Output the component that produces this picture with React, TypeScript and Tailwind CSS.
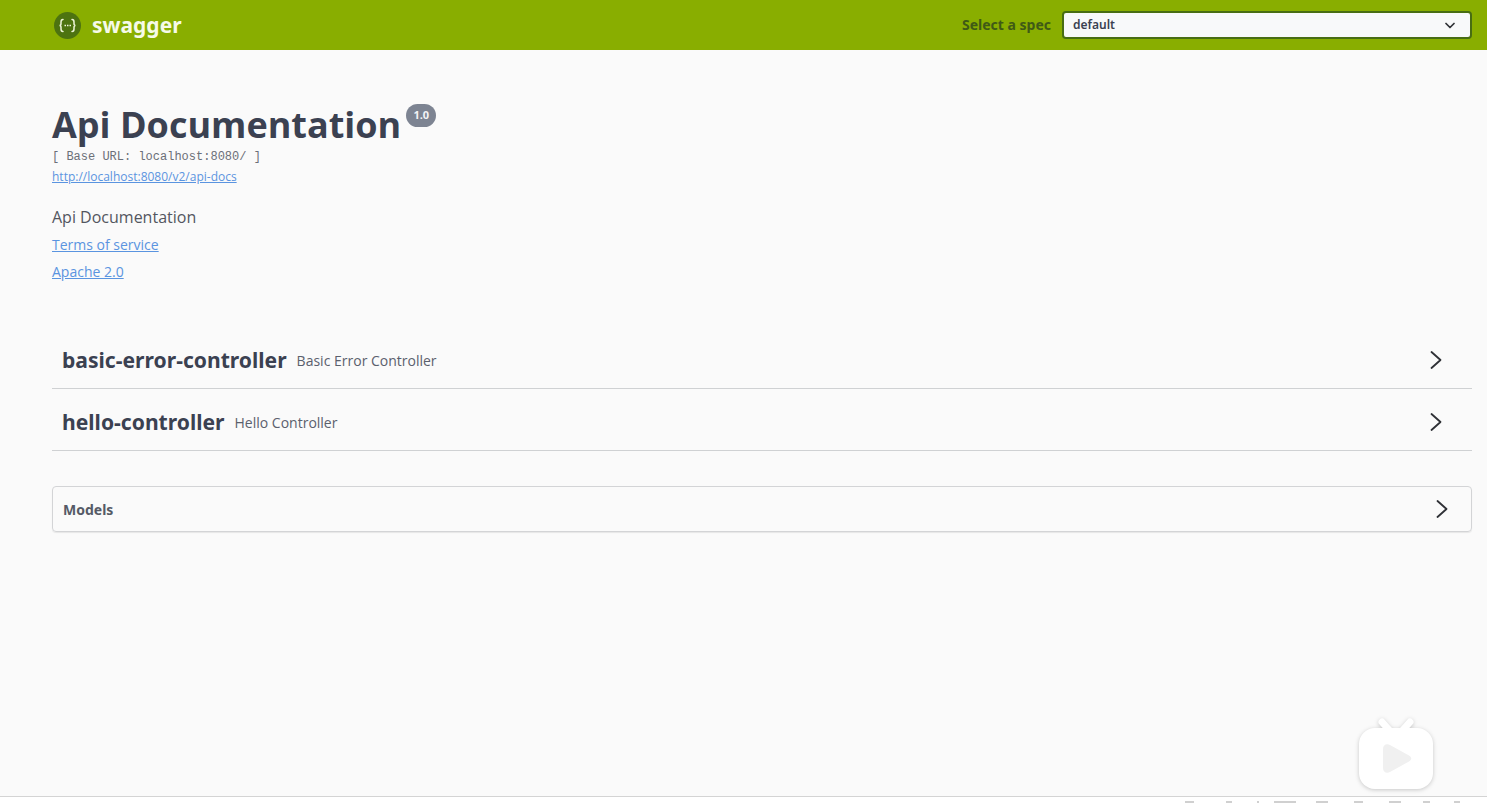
import React from "react";

const tags = [
  { name: "basic-error-controller", desc: "Basic Error Controller" },
  { name: "hello-controller", desc: "Hello Controller" },
];

// clipped tops of whatever sits under the window edge in the recording
const footerMarks = [
  { w: "w-[9px]", ml: "ml-[15px]" },
  { w: "w-[6px]", ml: "ml-[32px]" },
  { w: "w-[2px]", ml: "ml-[25px]" },
  { w: "w-[22px]", ml: "ml-[15px]" },
  { w: "w-[12px]", ml: "ml-[20px]" },
  { w: "w-[9px]", ml: "ml-[26px]" },
  { w: "w-[12px]", ml: "ml-[26px]" },
  { w: "w-[7px]", ml: "ml-[22px]" },
  { w: "w-[6px]", ml: "ml-[24px]" },
];

function Arrow({ className }: { className?: string }) {
  return (
    <svg width="12" height="20" viewBox="0 0 12 20" fill="none" className={className}>
      <path d="M1.500 2l9 8-9 8" stroke="#2f3136" strokeWidth="1.800" strokeLinecap="round" strokeLinejoin="round" />
    </svg>
  );
}

export default function App() {
  return (
    <div className="relative flex h-[803px] flex-col overflow-hidden bg-[#fafafa] font-['Open_Sans',sans-serif]">
      <header className="flex h-[50px] shrink-0 items-center bg-[#89ae00] pl-[54px] pr-[15px]">
        <svg width="27" height="27" viewBox="0 0 27 27" fill="none">
          <circle cx="13.500" cy="13.500" r="13.500" fill="#4d7310" />
          <path d="M9 7.500c-2 0-2 1-2 2.500v1.500c0 1-.5 2-1.500 2 1 0 1.500 1 1.500 2V17c0 1.500 0 2.500 2 2.500M18 7.500c2 0 2 1 2 2.500v1.500c0 1 .5 2 1.500 2-1 0-1.500 1-1.500 2V17c0 1.500 0 2.500-2 2.500" stroke="#eef5d8" strokeWidth="1.500" strokeLinecap="round" />
          <path d="M10.500 13.500h6.500" stroke="#eef5d8" strokeWidth="1.600" strokeDasharray="1.500 1" />
        </svg>
        <span className="ml-[11px] font-['Noto_Sans',sans-serif] text-[21px] font-bold leading-none text-[#f6fae8]">swagger</span>
        <span className="mb-[2px] ml-auto mr-[11px] font-['Noto_Sans',sans-serif] text-[14px] font-bold text-[#3f5a16]">Select a spec</span>
        <div className="flex h-[28px] w-[410px] items-center justify-between rounded-[4px] border-2 border-[#486d13] bg-[#f8f9fa] pl-[9px] pr-[15px]">
          <span className="font-['Noto_Sans',sans-serif] text-[12px] font-semibold text-[#3b4151]">default</span>
          <svg width="10" height="7" viewBox="0 0 10 7" fill="none">
            <path d="M1 1.500l4 4 4-4" stroke="#2f3136" strokeWidth="1.700" strokeLinecap="round" strokeLinejoin="round" />
          </svg>
        </div>
      </header>

      <main className="flex-1 pl-[52px] pr-[15px]">
        <section className="pt-[52px]">
          <div className="flex items-start">
            <h1 className="text-[36px] font-bold leading-[45px] text-[#3b4151]">Api Documentation</h1>
            <span className="ml-[5px] mt-[2px] flex h-[23px] w-[30px] items-center justify-center rounded-full bg-[#7d8492] text-[11px] font-bold text-[#f2f3f5]">1.0</span>
          </div>
          <p className="mt-[2px] font-['Liberation_Mono',monospace] text-[12px] leading-[16px] text-[#6b6f78]">[ Base URL: localhost:8080/ ]</p>
          <a className="mt-[4px] block text-[12px] leading-[16px] text-[#5a94e0] underline">http://localhost:8080/v2/api-docs</a>
          <p className="mt-[22px] text-[16px] leading-[20px] text-[#53565f]">Api Documentation</p>
          <a className="mt-[8px] block text-[14px] leading-[20px] text-[#5a94e0] underline">Terms of service</a>
          <a className="mt-[7px] block text-[14px] leading-[20px] text-[#5a94e0] underline">Apache 2.0</a>
        </section>

        <section className="mt-[45px]">
          {tags.map((tag) => (
            <div key={tag.name} className="flex h-[62px] items-center border-b border-[#cfd1d3] pl-[10px] pr-[30px] pt-[5px]">
              <span className="font-['Noto_Sans',sans-serif] text-[21.100px] font-bold text-[#3b4151]">{tag.name}</span>
              <span className="ml-[10px] text-[14px] text-[#5a606d]">{tag.desc}</span>
              <Arrow className="ml-auto" />
            </div>
          ))}
        </section>

        <section className="mt-[35px] flex h-[46px] items-center rounded-[4px] border border-[#d3d4d6] pl-[10px] pr-[23px] shadow-[0_1px_1px_rgba(0,0,0,0.08)]">
          <span className="font-['Noto_Sans',sans-serif] text-[14px] font-bold text-[#555a66]">Models</span>
          <Arrow className="ml-auto" />
        </section>
      </main>

      <footer className="flex h-[7px] shrink-0 items-end border-t border-[#d4d4d4] bg-white pl-[1170px]">
        {footerMarks.map((m, i) => (
          <span key={i} className={`h-[2px] bg-[#d0d0d0] ${m.w} ${m.ml}`} />
        ))}
      </footer>

      <div className="absolute left-[1359px] top-[717px]">
        <svg width="75" height="74" viewBox="0 0 75 74" className="drop-shadow-[0_1px_2px_rgba(0,0,0,0.2)]">
          <path d="M23 5l8 9M51 5l-8 9" stroke="#fff" strokeWidth="7" strokeLinecap="round" />
          <rect x="0" y="11" width="74" height="61" rx="16" fill="#fff" />
          <path d="M24 32c0-4 3.500-6 7-4l19 10.500c3 1.700 3 4.300 0 6L31 55c-3.500 2-7 0-7-4z" fill="#f0f0f0" />
        </svg>
      </div>
    </div>
  );
}
